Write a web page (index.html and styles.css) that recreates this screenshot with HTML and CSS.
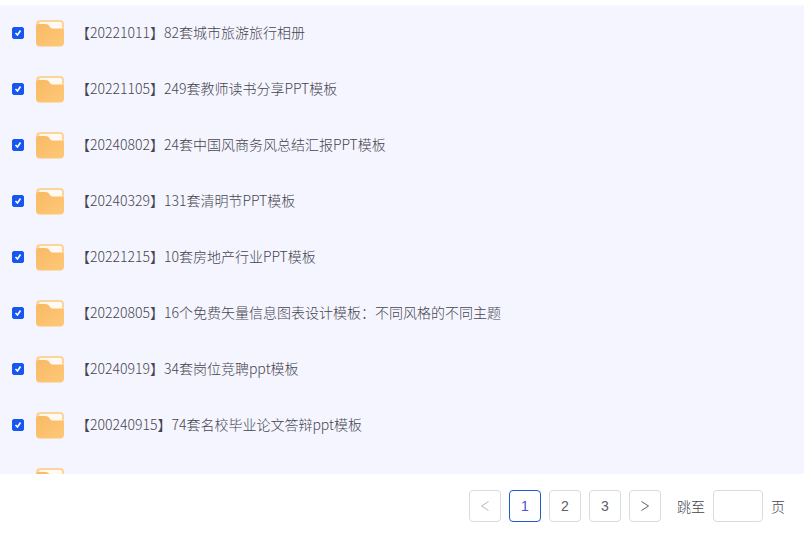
FILE: index.html
```html
<!DOCTYPE html>
<html lang="zh-CN">
<head>
    <meta charset="UTF-8">
    <meta name="viewport" content="width=device-width, initial-scale=1.0">
    <title>PPT模板</title>
    <link rel="stylesheet" href="styles.css">
</head>
<body>
    <svg class="icon-defs" aria-hidden="true">
        <defs>
            <linearGradient id="folder-front" x1="0" y1="0" x2="1" y2="1">
                <stop offset="0" stop-color="#f8ba66"/>
                <stop offset="1" stop-color="#ffc876"/>
            </linearGradient>
        </defs>
        <symbol id="folder" viewBox="0 -1 28 28">
            <rect x="0" y="0" width="28" height="22" rx="4" fill="#fdd49b"/>
            <rect x="3" y="2" width="23" height="14" rx="2" fill="#fffaf2"/>
            <path d="M0 7Q0 4 3 4H9.500C11.500 4 12.500 4.800 13.500 6.200C14.600 8 15.500 8.600 17.500 8.600H25Q28 8.600 28 11V22.500Q28 26.500 24 26.500H4Q0 26.500 0 22.500Z" fill="url(#folder-front)"/>
        </symbol>
    </svg>

    <ul class="file-list">
        <li>
            <label class="file-row">
                <input type="checkbox" class="file-check" checked>
                <svg class="file-icon"><use href="#folder"/></svg>
                <span class="file-name">【20221011】82套城市旅游旅行相册</span>
            </label>
        </li>
        <li>
            <label class="file-row">
                <input type="checkbox" class="file-check" checked>
                <svg class="file-icon"><use href="#folder"/></svg>
                <span class="file-name">【20221105】249套教师读书分享PPT模板</span>
            </label>
        </li>
        <li>
            <label class="file-row">
                <input type="checkbox" class="file-check" checked>
                <svg class="file-icon"><use href="#folder"/></svg>
                <span class="file-name">【20240802】24套中国风商务风总结汇报PPT模板</span>
            </label>
        </li>
        <li>
            <label class="file-row">
                <input type="checkbox" class="file-check" checked>
                <svg class="file-icon"><use href="#folder"/></svg>
                <span class="file-name">【20240329】131套清明节PPT模板</span>
            </label>
        </li>
        <li>
            <label class="file-row">
                <input type="checkbox" class="file-check" checked>
                <svg class="file-icon"><use href="#folder"/></svg>
                <span class="file-name">【20221215】10套房地产行业PPT模板</span>
            </label>
        </li>
        <li>
            <label class="file-row">
                <input type="checkbox" class="file-check" checked>
                <svg class="file-icon"><use href="#folder"/></svg>
                <span class="file-name">【20220805】16个免费矢量信息图表设计模板：不同风格的不同主题</span>
            </label>
        </li>
        <li>
            <label class="file-row">
                <input type="checkbox" class="file-check" checked>
                <svg class="file-icon"><use href="#folder"/></svg>
                <span class="file-name">【20240919】34套岗位竞聘ppt模板</span>
            </label>
        </li>
        <li>
            <label class="file-row">
                <input type="checkbox" class="file-check" checked>
                <svg class="file-icon"><use href="#folder"/></svg>
                <span class="file-name">【200240915】74套名校毕业论文答辩ppt模板</span>
            </label>
        </li>
        <li>
            <label class="file-row">
                <input type="checkbox" class="file-check" checked>
                <svg class="file-icon"><use href="#folder"/></svg>
            </label>
        </li>
    </ul>

    <nav class="pager">
        <button class="page-btn" disabled>
            <svg class="arrow" viewBox="0 0 12 12"><path d="M9.500 1.500L2.500 6L9.500 10.500"/></svg>
        </button>
        <button class="page-btn active">1</button>
        <button class="page-btn">2</button>
        <button class="page-btn">3</button>
        <button class="page-btn">
            <svg class="arrow" viewBox="0 0 12 12"><path d="M2.500 1.500L9.500 6L2.500 10.500"/></svg>
        </button>
        <label class="jump">
            跳至
            <input type="text" class="jump-input">
            页
        </label>
    </nav>
</body>
</html>
```

FILE: styles.css
```css
* {
    margin: 0;
    padding: 0;
    box-sizing: border-box;
}

body {
    font-family: "Noto Sans CJK SC", sans-serif;
    font-size: 14px;
    line-height: 20px;
    color: #45454f;
    background: #fff;
    height: 100vh;
    display: flex;
    flex-direction: column;
}

.icon-defs {
    position: absolute;
    width: 0;
    height: 0;
}

.file-list {
    flex: 1;
    min-height: 0;
    margin-top: 5px;
    background: #f5f5ff;
    box-shadow: inset 0 1px #fafafc;
    list-style: none;
    overflow: hidden;
}

.file-row {
    display: flex;
    align-items: center;
    gap: 12px;
    height: 56px;
    padding: 0 12px;
    cursor: pointer;
}

.file-check {
    appearance: none;
    flex: none;
    width: 12px;
    height: 12px;
    border: 1px solid #c8cad4;
    border-radius: 2px;
    background: #fff;
}

.file-check:checked {
    border-color: #1557f0;
    background: #1557f0 url("data:image/svg+xml,<svg xmlns='http://www.w3.org/2000/svg' viewBox='0 0 10 10'><path d='M2.500 5L4.500 7L7.500 2.500' fill='none' stroke='white' stroke-width='1.600'/></svg>") center / 10px 10px no-repeat;
}

.file-icon {
    flex: none;
    width: 28px;
    height: 28px;
}

.file-name {
    padding-bottom: 2px;
    font-weight: 300;
    white-space: nowrap;
}

.pager {
    display: flex;
    justify-content: flex-end;
    align-items: center;
    gap: 8px;
    padding: 16px 19px 13px;
}

.page-btn {
    display: flex;
    align-items: center;
    justify-content: center;
    width: 32px;
    height: 32px;
    border: 1px solid #d9dbe0;
    border-radius: 4px;
    background: #fff;
    color: #606066;
    font-family: "Liberation Sans", sans-serif;
    font-size: 14px;
    cursor: pointer;
}

.page-btn.active {
    border-color: #2458c8;
    color: #4a50d8;
}

.page-btn:disabled {
    color: #b8b8be;
    cursor: default;
}

.arrow {
    width: 12px;
    height: 12px;
    fill: none;
    stroke: currentColor;
}

.jump {
    display: flex;
    align-items: center;
    gap: 8px;
    margin-left: 8px;
    font-weight: 300;
}

.jump-input {
    width: 50px;
    height: 32px;
    padding: 0 8px;
    border: 1px solid #d9dbe0;
    border-radius: 4px;
    background: #fff;
    font: inherit;
}
```
